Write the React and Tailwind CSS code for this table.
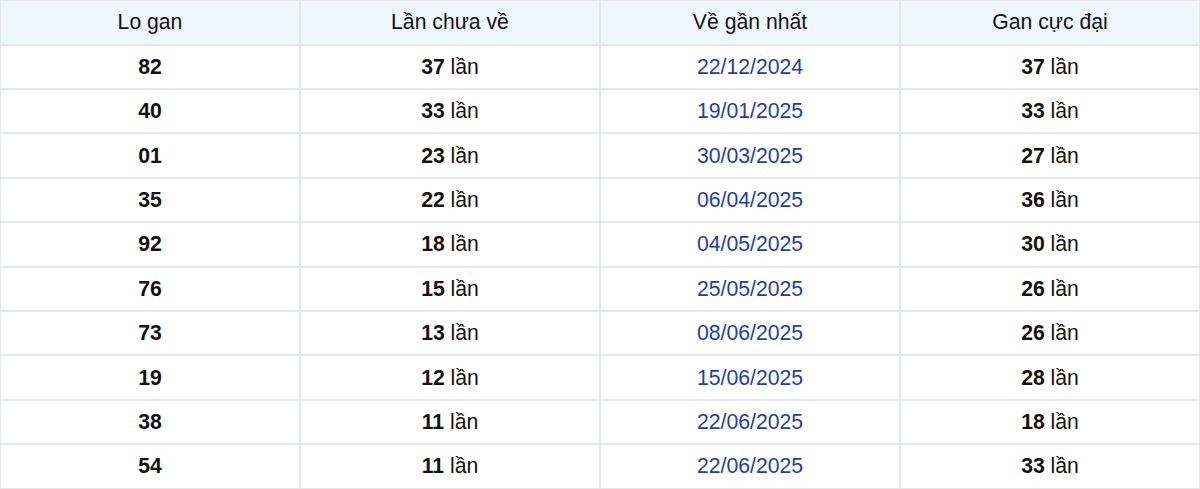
const rows = [
  ['82', '37', '22/12/2024', '37'],
  ['40', '33', '19/01/2025', '33'],
  ['01', '23', '30/03/2025', '27'],
  ['35', '22', '06/04/2025', '36'],
  ['92', '18', '04/05/2025', '30'],
  ['76', '15', '25/05/2025', '26'],
  ['73', '13', '08/06/2025', '26'],
  ['19', '12', '15/06/2025', '28'],
  ['38', '11', '22/06/2025', '18'],
  ['54', '11', '22/06/2025', '33'],
];

const cell = 'border border-[#e4e7ec] text-center align-middle p-0';

export default function App() {
  return (
    <div className="w-[1200px] bg-white font-['Liberation_Sans',Arial,sans-serif] text-[21.2px] text-[#111]">
      <table className="w-full table-fixed border-separate border-spacing-0">
        <thead>
          <tr className="h-[44.6px] bg-[#eef6fe]">
            <th className={`${cell} font-normal`}>Lo gan</th>
            <th className={`${cell} font-normal`}>Lần chưa về</th>
            <th className={`${cell} font-normal`}>Về gần nhất</th>
            <th className={`${cell} font-normal`}>Gan cực đại</th>
          </tr>
        </thead>
        <tbody>
          {rows.map((r, i) => (
            <tr key={i} className="h-[44.4px]">
              <td className={`${cell} font-bold`}>{r[0]}</td>
              <td className={cell}>
                <b>{r[1]}</b> lần
              </td>
              <td className={`${cell} text-[#1c3cb8]`}>{r[2]}</td>
              <td className={cell}>
                <b>{r[3]}</b> lần
              </td>
            </tr>
          ))}
        </tbody>
      </table>
    </div>
  );
}
